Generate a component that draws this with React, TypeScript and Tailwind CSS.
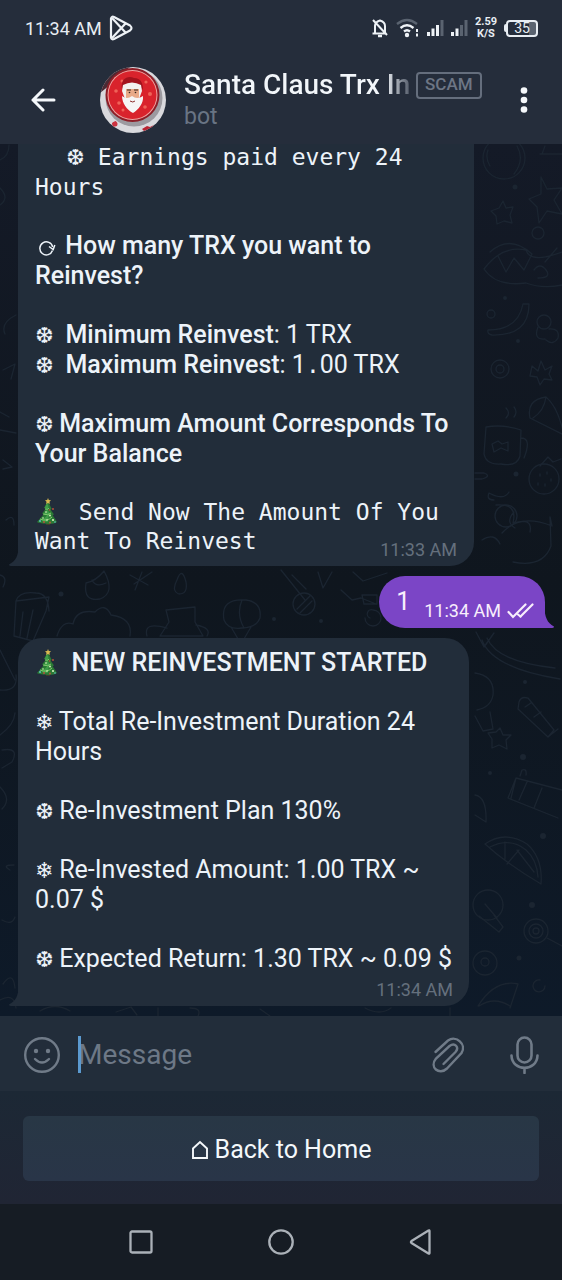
import type { ReactNode } from "react";

const MONO = "font-['DejaVu_Sans_Mono',monospace] text-[23px]";

function Flake({ children }: { children: string }) {
  return <span className="inline-block w-[18px] font-['DejaVu_Sans',sans-serif] text-[22px] font-normal leading-none">{children}</span>;
}

function Tree() {
  return (
    <svg viewBox="0 0 24 28" className="inline-block h-7 w-6 align-[-6px]" role="img" aria-label="Christmas tree">
      <path d="M11 22h4v5h-4z" fill="#3f3a2c" />
      <path d="M13 3 9 10l2 .4-4 5 2 .5L2 24c3 2 17 3 20 0l-4.500-7 1.500-.5-3.500-5 1.200-.6z" fill="#2b7a35" />
      <path d="M12 5 9.500 10l3 1-4 5 4 1-6 6 6 1 2-9-2-3 1-4z" fill="#3f9c48" />
      <path d="M8 16q5 2 8-1M5 21q7 3 12-2M10 11q3 1 4-1" fill="none" stroke="#7fce6d" strokeWidth="1" />
      <path d="m13 0 .8 2 2.200.3-1.500 1.500.3 2.200-1.800-1-1.800 1 .3-2.200L10 2.300 12.200 2z" fill="#d7b750" />
      <g fill="#e4f7c4">
        <circle cx="11" cy="14" r=".8" />
        <circle cx="15" cy="17.500" r=".9" />
        <circle cx="8" cy="20" r=".8" />
        <circle cx="18" cy="22" r="1" />
        <circle cx="12" cy="22" r=".8" />
      </g>
      <g fill="#c4513d">
        <circle cx="14.500" cy="12" r=".8" />
        <circle cx="18" cy="11" r=".9" />
        <circle cx="9" cy="24" r=".9" />
        <circle cx="15" cy="24.500" r=".9" />
      </g>
      <circle cx="5" cy="23" r=".9" fill="#62c7d6" />
      <circle cx="20" cy="24" r=".8" fill="#62c7d6" />
    </svg>
  );
}

function Reload() {
  return (
    <svg viewBox="0 0 24 20" className="inline-block h-5 w-6 align-[-4px]" fill="none" stroke="#eef4fa" strokeWidth="1.500" aria-hidden="true">
      <path d="M17.500 12.500a6.500 6.500 0 1 1 .2-3.500" />
      <path d="m14 8.500 4.200 3 1.600-4.500" />
    </svg>
  );
}

function Avatar() {
  return (
    <svg viewBox="0 0 66 66" className="size-[66px] shrink-0" role="img" aria-label="Santa Claus">
      <defs>
        <clipPath id="avatar-clip">
          <circle cx="33" cy="33" r="33" />
        </clipPath>
      </defs>
      <g clipPath="url(#avatar-clip)">
        <rect width="66" height="66" fill="#d9d9dd" />
        <path d="M0 0h30L10 18 0 26z" fill="#4a2a34" />
        <circle cx="34" cy="31" r="28.500" fill="#9c9aa0" />
        <circle cx="32.500" cy="28" r="27" fill="#8d1e27" />
        <circle cx="32.500" cy="28" r="25" fill="#f0a5a3" />
        <circle cx="32.500" cy="28" r="24" fill="#d9232c" />
        <g fill="#ef6358">
          <circle cx="16" cy="24" r="1.800" />
          <circle cx="19" cy="36" r="1.800" />
          <circle cx="46" cy="15" r="1.600" />
          <circle cx="50" cy="27" r="2" />
          <circle cx="45" cy="40" r="1.800" />
          <circle cx="23" cy="43" r="1.500" />
          <circle cx="22" cy="14" r="1.500" />
        </g>
        <path d="M22 22C20 12 28 8 34 11c7 0 9 5 9 12l-3-4H24z" fill="#a3121c" />
        <path d="M23 18q9-5 18 0l1 6-3 8H25l-3-8z" fill="#f3f0ee" />
        <path d="M26 22h13v9H26z" fill="#e8a987" />
        <path d="M27 23h4M34 23h4" stroke="#76503f" strokeWidth="1.300" />
        <circle cx="29.500" cy="25.500" r=".8" fill="#2d211f" />
        <circle cx="35.500" cy="25.500" r=".8" fill="#2d211f" />
        <path d="M22 29q5 4 10 0 5 4 11 0c1 7-5 14-10 17-6-3-11-10-11-17z" fill="#f6f5f5" />
        <path d="M30 34q3 2 5 0" stroke="#8d2d2c" fill="none" />
        <path d="m12 56 4-2 1 4-4 2zM42 62l5-3 3 1 4-2-3 4-7 2z" fill="#b92432" />
        <circle cx="15" cy="57" r="2.500" fill="#cc3340" />
      </g>
    </svg>
  );
}

function StatusBar() {
  return (
    <div className="flex h-14 items-center justify-between pl-[25px] pr-6 text-[18px] text-[#e8edf3]">
      <div className="flex items-center gap-[7px]">
        <span>11:34 AM</span>
        <svg viewBox="0 0 24 26" className="h-[26px] w-6" fill="none" stroke="#eef2f6" strokeWidth="2.200" strokeLinejoin="round" aria-hidden="true">
          <path d="M2 3.500v19q.5 2.500 3 1.500l16-8.500q3-2.500 0-5L5 2Q2.500 1 2 3.500z" />
          <path d="m3 3 14 15M3 23 17 8" />
        </svg>
      </div>
      <div className="flex items-center gap-[7px]">
        <svg viewBox="0 0 18 20" className="h-5 w-[18px]" fill="none" stroke="#eef2f6" strokeWidth="2" aria-hidden="true">
          <path d="M4 15V8q0-4 5-5.500Q14 4 14 8v7M1.500 15.500h14M2 2l14 15" />
          <path d="M7 18h4" strokeWidth="2.500" />
        </svg>
        <svg viewBox="0 0 24 20" className="h-5 w-6" fill="none" strokeWidth="2.300" aria-hidden="true">
          <path d="M1 6Q11-2 21 6" stroke="#5a6370" />
          <path d="M4.500 10q6.500-5.500 13 0M8 13.500q3-2.500 6 0" stroke="#eef2f6" />
          <circle cx="11" cy="17" r="2.200" fill="#eef2f6" />
          <path d="M21 11v3M21 15.500v3" stroke="#eef2f6" strokeWidth="2" />
        </svg>
        <svg viewBox="0 0 17 18" className="h-[18px] w-[17px]" aria-hidden="true">
          <path d="M0 13h3v4H0zM4.500 9.500h3V17h-3zM9 6h3v11H9z" fill="#eef2f6" />
          <path d="M13.500 1h3v16h-3z" fill="#5a6370" />
        </svg>
        <svg viewBox="0 0 17 18" className="h-[18px] w-[17px]" aria-hidden="true">
          <path d="M0 13h3v4H0zM4.500 9.500h3V17h-3z" fill="#eef2f6" />
          <path d="M9 6h3v11H9zM13.500 1h3v16h-3z" fill="#5a6370" />
        </svg>
        <div className="text-center text-[11px] font-bold leading-[12px]">
          <div>2.59</div>
          <div>K/S</div>
        </div>
        <div className="flex items-center">
          <div className="h-2 w-[2px] rounded-l bg-[#e8edf3]" />
          <div className="flex h-[17px] w-8 items-center justify-center rounded-[4px] border-2 border-[#e8edf3] bg-linear-to-r from-transparent from-75% to-[#5a6370] to-75% text-[14px] leading-none">
            35
          </div>
        </div>
      </div>
    </div>
  );
}

function Header() {
  return (
    <header className="z-10 shrink-0 bg-[#252d3b]">
      <StatusBar />
      <div className="flex h-[88px] items-center pl-[30px] pr-5">
        <button type="button" aria-label="Back" className="mr-11 shrink-0">
          <svg viewBox="0 0 26 24" className="h-6 w-[26px]" fill="none" stroke="#f5f8fb" strokeWidth="3" strokeLinecap="round" strokeLinejoin="round">
            <path d="M24 12H3M13 2 3 12l10 10" />
          </svg>
        </button>
        <Avatar />
        <div className="ml-[18px] min-w-0 flex-1 pt-[2px]">
          <div className="flex items-center gap-1">
            <h1 className="w-[228px] overflow-hidden whitespace-nowrap bg-linear-to-r from-[#f2f6fa] from-88% to-[#4a5260] bg-clip-text text-[28px] font-medium leading-8 text-transparent">
              Santa Claus Trx In
            </h1>
            <span className="flex h-[27px] items-center rounded-[4px] border-2 border-[#656e7d] px-[7px] text-[17px] font-medium text-[#6d7685]">SCAM</span>
          </div>
          <p className="text-[23px] leading-8 text-[#697484]">bot</p>
        </div>
        <button type="button" aria-label="More options" className="flex w-9 shrink-0 justify-center">
          <svg viewBox="0 0 8 26" className="h-[26px] w-2" fill="#f5f8fb">
            <circle cx="4" cy="3.500" r="3.300" />
            <circle cx="4" cy="13" r="3.300" />
            <circle cx="4" cy="22.500" r="3.300" />
          </svg>
        </button>
      </div>
    </header>
  );
}

function Wallpaper() {
  return (
    <svg viewBox="0 144 562 872" preserveAspectRatio="xMaxYMin slice" className="absolute inset-0 size-full" fill="none" stroke="#1b2531" strokeWidth="1.300" strokeLinecap="round" strokeLinejoin="round" aria-hidden="true">
      <circle cx="504" cy="158" r="21" />
      <path d="M517 146q8 14-3 28M488 150q-3 8 2 16M540 154h22M545 146l-3 8" />
      <path d="m541 177 6 12 15-1-8 12 8 14-15-3-8 12-2-16-8-8 12-5zM503 201l3 7 7-1-3 8 2 8-8-2-7 3-1-8-5-5 8-3z" />
      <circle cx="538" cy="233" r="6" />
      <path d="M484 269q18-24 42-19 4 14 36 2M484 269q12 18 42 14 16 6 36 2M490 252q20-18 42 2M498 256l8 16 8-14 10 12 8-16M534 270q6-8 12 0t-8 8M545 262l12-14" />
      <path d="M488 330q30 0 35-26h6q0 32-37 31-5-1-4-5z" />
      <circle cx="491" cy="314" r="4" />
      <circle cx="544" cy="322" r="7" />
      <path d="M538 327q-5 13 7 12M549 329q11-1 9 9-5 8-12 2" />
      <circle cx="500" cy="369" r="9" />
      <circle cx="500" cy="369" r="4" />
      <path d="m532 366 6 5 3-10 4 9 7-4-3 8 3 6-8-1-4 6-3-8-7-1z" />
      <path d="M530 418q-4-18 16-21 12 10 18 38zM546 397q-2 14-13 21M486 427l-2 27q2 11 17 10 16 3 19-8l1-26q-18-6-35-3zM521 438q11 0 3 20M492 444l6-3 4 3 6-2v9l-7-3-7 4zM506 418q5-5 0-10M514 417q4-5 0-10" />
      <circle cx="544" cy="479" r="15" />
      <path d="M540 466l8-9 5 5 8-3M540 474v2M547 472v2M538 483v2M545 484v2M551 479v2" />
      <path d="M475 473h9q8 3-2 6h-7M494 500q-8 0-5-7 15 8 20-1M482 540q12-8 18 4M496 505q22-2 17 18 20-6 17 9M502 533q18-20 50-7l-2-9 1 29q-8 22-38 16M514 512q-9 10 1 16" />
      <circle cx="506" cy="516" r="11" />
      <path d="M16 601l33-4-3 14-13 30-19-5zM16 601q3-10 20-8 12 0 13 18M23 612l-3 24M33 610l-6 28M57 636q5-16 16-12 3-15 22-12 10-10 16 3 22 3 19 21M86 583q10-2 18-12 12 22-4 28-17 3-14-16zM92 580q4 8 14 3" />
      <path d="m130 575 18 10M142 572l-7 18M152 572l-18 12M177 580q5-14 9 2 2 12-7 12-8-3-2-14M166 610l29-3v15l8 14h-43l9-14zM147 636q-4-15 20-8M196 625q16 3 11 11M224 620q-4-22 22-20 16 2 14 18-4 10-18 10-14 2-18-8zM231 627l10 17 10-17M242 600q-6 14 2 28M281 570l24 30M292 575l14 14M318 572l5 16 9-16M353 572l10 9 24-8" />
      <circle cx="304" cy="604" r="11" />
      <path d="m297 609 13-13M300 613l12-12M341 590l11 10 9-2 15 6M362 595h15v9h-13zM365 618a8 8 0 1 0 8-8 4 4 0 0 0-3 8" />
      <path d="m476 632 8 15 10-14M482 640q10 28 78 39M487 638q10 24 68 30M475 673q20 3 18 22-2 12-16 15M475 716l8 15 10-2-3-17M519 702q2-6 9-4l26 32-6 7-30-28zM525 707l6-4M534 717l7-5M548 737l10-8" />
      <path d="m500 728 3 7h8l-5 5 1 9-8-4-7 3v-9l-4-6 8-1zM508 798l8-20 46 12M508 798l50 20M516 778l-5 20M527 782l-8 18M542 788l-8 20M520 776l2-6q5-2 4 5M475 795q12 2 11 27l-11-7" />
      <path d="M485 844q20-14 42 0 16 14 14 40-34-20-56-40zM490 847q20-10 36 3 11 10 12 27M505 842v17M519 850l-12 14M517 850l17 22" />
      <circle cx="488" cy="905" r="15" />
      <path d="m479 916 20 16 4-5-9-12M485 904l12 14" />
      <circle cx="536" cy="931" r="12" />
      <circle cx="536" cy="931" r="7" />
      <circle cx="536" cy="931" r="3" />
      <path d="m547 938 15 8M478 1006q17-27 40-22l-8 24M479 1006q15-10 31 0M545 986a6 6 0 1 1-5-6" />
      <circle cx="485" cy="963" r="12" />
      <circle cx="485" cy="962" r="4" />
      <path d="M0 160q9-4 9-15M0 188q10 10 0 17M16 315q-16 8-11 19M3 370l12-6-4 15M0 412l9 5M0 430l16 3M3 460l9 7-9 2M6 520q8-7 8 5M0 575q8 2 3 12M0 650l15 30M0 690q18 2 16-15M0 735q14-10 15-22M2 750q18-3 10 12L2 768M0 787q12 12 2 22M10 870q-9-5 4-5M2 920q10 6 13-3M3 984q10-14 12 4M0 1000q14-8 16 8M40 1011q15-9 30 0M116 1012l15-5 6 8M158 1008v8M190 1008q12 0 8 8M260 1009l10 7M365 1008q15 8 26 0M450 1008v8" />
      <g fill="#1b2531" stroke="none">
        <circle cx="515" cy="187" r="2.500" />
        <circle cx="505" cy="298" r="2" />
        <circle cx="518" cy="341" r="2" />
        <circle cx="516" cy="474" r="2.500" />
        <circle cx="61" cy="594" r="2.500" />
        <circle cx="274" cy="619" r="2" />
        <circle cx="321" cy="621" r="2" />
        <circle cx="525" cy="682" r="2" />
        <circle cx="523" cy="757" r="3" />
        <circle cx="490" cy="773" r="2" />
        <circle cx="543" cy="836" r="3" />
        <circle cx="532" cy="905" r="3" />
        <circle cx="519" cy="958" r="2.500" />
      </g>
    </svg>
  );
}

function IncomingTail() {
  return (
    <svg viewBox="0 0 10 20" className="absolute bottom-0 -left-[9px] h-5 w-[10px]" fill="#222d3a" aria-hidden="true">
      <path d="M10 0C9 10 7 15 0 18.500Q0 20 2 20h8z" />
    </svg>
  );
}

function P({ children, className = "leading-[30px]" }: { children: ReactNode; className?: string }) {
  return <p className={className}>{children}</p>;
}

export default function App() {
  return (
    <div className="flex h-dvh flex-col overflow-hidden bg-[#111922] font-[Roboto,sans-serif] text-[#edf3f9]">
      <Header />

      <main className="relative flex min-h-0 flex-1 flex-col justify-end overflow-hidden bg-linear-to-b from-[#141a27] via-[#0f161e] to-[#0e1a29] pb-[10px]">
        <Wallpaper />

        <article className="relative ml-[18px] flex w-fit max-w-[456px] shrink-0 flex-col gap-[29px] rounded-br-[24px] bg-[#222d3a] px-[17px] pb-[10px] text-[25px]">
          <IncomingTail />
          <P className={`whitespace-pre-wrap leading-[30px] ${MONO}`}>
            <span className="ml-[31px]"><Flake>❆</Flake></span>{" Earnings paid every 24 Hours"}
          </P>
          <P className="font-medium leading-[30px]">
            <Reload />{" "}How many TRX you want to Reinvest?
          </P>
          <div>
            <P className="whitespace-pre-wrap leading-[30px]"><Flake>❆</Flake>{"  "}<b className="font-medium">Minimum Reinvest</b>: 1 TRX</P>
            <P className="whitespace-pre-wrap leading-[30px]">
              <Flake>❆</Flake>{"  "}<b className="font-medium">Maximum Reinvest</b>: 1<span className={MONO}>.</span>00 TRX
            </P>
          </div>
          <P className="font-medium leading-[30px]"><Flake>❆</Flake> Maximum Amount Corresponds To Your Balance</P>
          <P className={`whitespace-pre-wrap leading-[29px] ${MONO}`}><Tree />{" "}<span className="ml-[6px]">Send Now The Amount Of You Want To Reinvest</span></P>
          <time className="absolute bottom-[6px] right-[17px] text-[18px] leading-5 text-[#65707d]">11:33 AM</time>
        </article>

        <article className="relative mr-[17px] mt-[10px] flex h-[52px] w-fit shrink-0 gap-[14px] self-end rounded-l-[26px] rounded-tr-[26px] bg-[#7b45c6] pl-[17px] pr-[11px] text-[#f8eefc]">
          <svg viewBox="0 0 10 22" className="absolute bottom-0 -right-[9px] h-[22px] w-[10px]" fill="#7b45c6" aria-hidden="true">
            <path d="M0 0c1 11 3 17 10 20.500Q10 22 8 22H0z" />
          </svg>
          <p className="pt-[11px] text-[25px] leading-[30px]">1</p>
          <div className="flex items-center gap-[6px] pt-[18px]">
            <time className="text-[18px] leading-5">11:34 AM</time>
            <svg viewBox="0 0 27 16" className="h-4 w-[27px]" fill="none" stroke="#f8eefc" strokeWidth="2.200" strokeLinecap="round" aria-label="Read">
              <path d="m1.500 9 4.500 5L18.500 1.500M13.500 13.500 25.500 1.500" />
              <path d="m11 11.500 2.500 2" />
            </svg>
          </div>
        </article>

        <article className="relative ml-[18px] mt-[10px] flex w-fit max-w-[451px] shrink-0 flex-col gap-[29px] rounded-t-[24px] rounded-br-[24px] bg-[#222d3a] pb-[6px] pl-[17px] pr-[14px] pt-[10px] text-[25px]">
          <IncomingTail />
          <P className="whitespace-pre-wrap font-medium leading-[30px]"><Tree />{"  "}NEW REINVESTMENT STARTED</P>
          <P><Flake>❄</Flake> Total Re-Investment Duration 24 Hours</P>
          <P><Flake>❆</Flake> Re-Investment Plan 130%</P>
          <P><Flake>❄</Flake> Re-Invested Amount: 1.00 TRX ~ 0.07 $</P>
          <div>
            <P><Flake>❆</Flake> Expected Return: 1.30 TRX ~ 0.09 $</P>
            <time className="mt-[6px] block pr-[2px] text-right text-[18px] leading-5 text-[#65707d]">11:34 AM</time>
          </div>
        </article>
      </main>

      <form className="flex h-[75px] shrink-0 items-center bg-[#222d3a] pl-6 pr-[22px] pt-[2px]" onSubmit={(e) => e.preventDefault()}>
        <button type="button" aria-label="Emoji" className="shrink-0">
          <svg viewBox="0 0 36 36" className="size-9" fill="none" stroke="#707b88" strokeWidth="2.400" strokeLinecap="round">
            <circle cx="18" cy="18" r="16.800" />
            <path d="M11 22q7 7 14 0" />
            <circle cx="12" cy="14" r="2.200" fill="#707b88" stroke="none" />
            <circle cx="24" cy="14" r="2.200" fill="#707b88" stroke="none" />
          </svg>
        </button>
        <div className="relative ml-[18px] flex min-w-0 flex-1 items-center">
          <input type="text" aria-label="Message" placeholder="Message" className="w-full bg-transparent text-[28px] leading-9 outline-none placeholder:text-[#6d7886]" />
          <div className="absolute left-0 h-[37px] w-[3px] bg-[#5b9ad0]" />
        </div>
        <button type="button" aria-label="Attach file" className="mr-11 shrink-0">
          <svg viewBox="0 0 34 38" className="h-[38px] w-[34px]" fill="none" stroke="#707b88" strokeWidth="2.400" strokeLinecap="round">
            <path d="M3.500 16 16 4.500C24-1 35 8 29.500 17L15 32.500C7 40-3 31 4 22.500L17.500 10C23 6 27.500 11.500 23.500 16L11.500 28" />
          </svg>
        </button>
        <button type="button" aria-label="Voice message" className="shrink-0">
          <svg viewBox="0 0 30 38" className="h-[38px] w-[30px]" fill="none" stroke="#707b88" strokeWidth="2.600" strokeLinecap="round">
            <rect x="7.500" y="1.500" width="14" height="25" rx="7" />
            <path d="M1.500 19.500C2 36 27 36 27.500 19.500M14.500 32v5" />
          </svg>
        </button>
      </form>

      <div className="shrink-0 bg-linear-to-b from-[#1c2835] to-[#202534] px-[23px] pb-[23px] pt-[25px]">
        <button type="button" className="flex h-[65px] w-full items-center justify-center gap-[6px] rounded-[6px] bg-linear-to-b from-[#283745] to-[#293548] pt-[2px] text-[25px] text-[#f4f8fb]">
          <svg viewBox="0 0 18 20" className="h-5 w-[18px]" fill="none" stroke="#f4f8fb" strokeWidth="1.900" aria-hidden="true">
            <path d="M2 18V8.500L9 2l7 6.500V18z" />
          </svg>
          Back to Home
        </button>
      </div>

      <nav aria-label="System navigation" className="flex h-[76px] shrink-0 items-center justify-center gap-[115px] bg-[#161c24]">
        <button type="button" aria-label="Recent apps">
          <svg viewBox="0 0 24 24" className="size-6" fill="none" stroke="#abb1b8" strokeWidth="2.300">
            <rect x="1.500" y="1.500" width="21" height="21" rx="1.500" />
          </svg>
        </button>
        <button type="button" aria-label="Home">
          <svg viewBox="0 0 26 26" className="size-[26px]" fill="none" stroke="#abb1b8" strokeWidth="2.300">
            <circle cx="13" cy="13" r="11.700" />
          </svg>
        </button>
        <button type="button" aria-label="Back">
          <svg viewBox="0 0 24 26" className="h-[26px] w-6" fill="none" stroke="#abb1b8" strokeWidth="2.300" strokeLinejoin="round">
            <path d="M20.500 2v22q0 1-1 .5L2.500 14q-1-1 0-2l17-10.500q1-.5 1 .5z" />
          </svg>
        </button>
      </nav>
    </div>
  );
}
